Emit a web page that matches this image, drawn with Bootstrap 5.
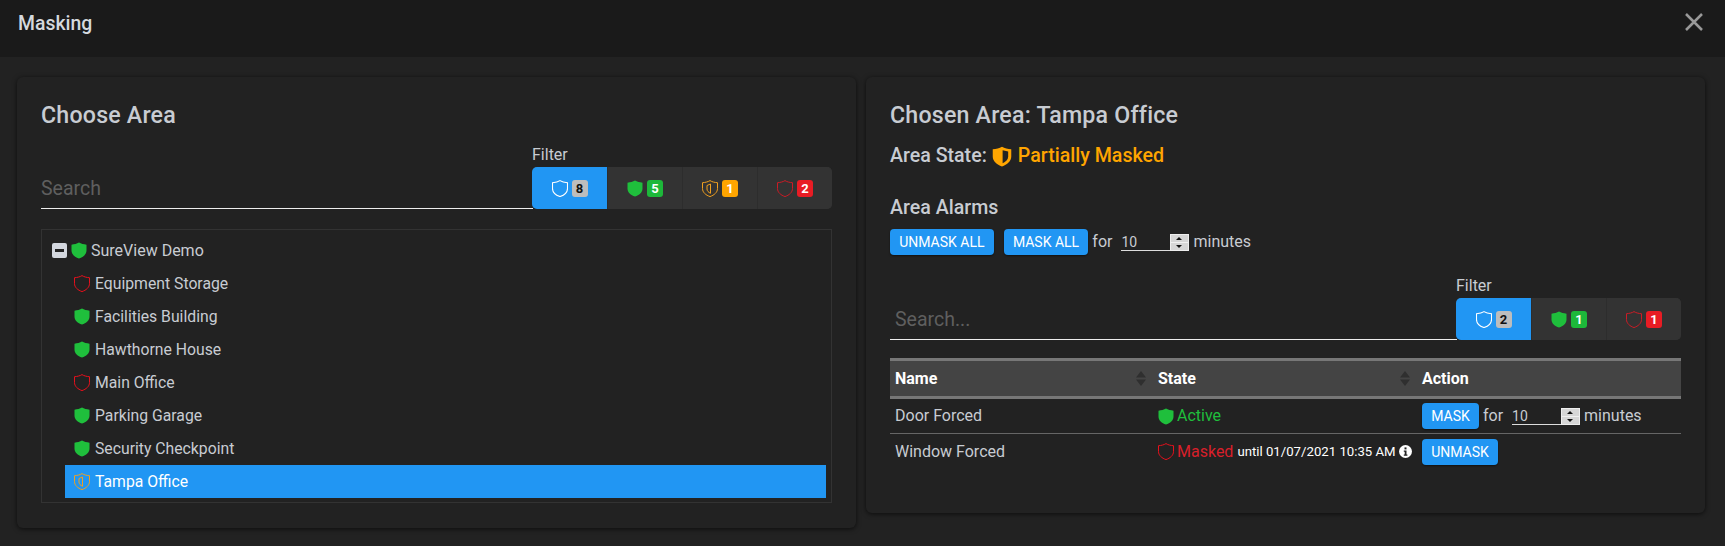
<!DOCTYPE html>
<html lang="en">
<head>
<meta charset="utf-8">
<title>Masking</title>
<link rel="stylesheet" href="https://cdn.jsdelivr.net/npm/bootstrap@5.3.0/dist/css/bootstrap.min.css">
<style>
html,body{height:100%}
body{background:#222;color:#c8ccd2;font-family:Roboto,"Liberation Sans",sans-serif;font-size:16px;overflow:hidden}
.mask-top{height:57px;background:#1a1a1a;padding:0 18px 9px 18px}
.mask-top h1{font-size:19.4px;font-weight:500;margin:0;color:#d5d9de}
.mask-x{width:20px;height:20px;margin-right:3px;margin-bottom:4px}
.mask-body{padding:20px 17px 0 17px;gap:10px;align-items:flex-start}
.pane{background:#222;border-radius:6px;box-shadow:0 1px 5px rgba(0,0,0,.65);padding:24px;padding-bottom:0}
.pane-l{width:839px;height:451px;flex:none}
.pane-r{width:839px;height:436px;flex:none}
.pane h2{font-size:23.2px;font-weight:500;line-height:28px;margin:0;color:#c8ccd2;letter-spacing:.2px}
.filter-row{align-items:flex-end}
.filter-l{margin-top:14px}
.filter-r{margin-top:19px}
.search-inp{flex:1;background:transparent;border:0;border-bottom:1px solid #eee;border-radius:0;color:#ccc;font-size:19.5px;height:42px;padding:2px 0 0 0;outline:0;min-width:0;margin-right:-1px}
.search-pad{padding-left:5px}
.search-inp::placeholder{color:#5f5f5f;opacity:1}
.filter-lbl{font-size:16px;line-height:24px;color:#c8ccd2}
.fgroup{border-radius:5px;overflow:hidden;background:#333;height:42px}
.fbtn{width:75px;border:0;background:#333;display:flex;align-items:center;justify-content:center;gap:4px;padding:0;border-left:1px solid #2d2d2d}
.fbtn:first-child{border-left:0}
.fbtn.on{background:#2196f3}
.cnt{width:16px;height:17px;border-radius:3px;font-size:13px;font-weight:700;line-height:17px;text-align:center;color:#fff}
.cnt-grey{background:#bdbdbd;color:#111}
.cnt-green{background:#1db83a}
.cnt-amber{background:#ffa500}
.cnt-red{background:#e81c24}
.shield{width:16px;height:17px;flex:none}
.shield-lg{width:20px;height:21px}
.tree-box{border:1px solid #333;height:274px;margin-top:20px;padding:4px 5px 0 5px}
.tree-row{height:33px;display:flex;align-items:center;font-size:15.75px;color:#c8ccd2}
.tree-sub{margin-left:18px;padding-left:9px;gap:5px}
.tree-sub.sel{background:#2196f3;color:#fff}
.tree-root{padding-left:5px;gap:4px;font-size:16px}
.minus{width:15px;height:15px;background:#d3d7de;border-radius:2px;display:flex;align-items:center;justify-content:center}
.minus i{display:block;width:9px;height:3px;background:#222}
.state-line{font-size:19.6px;font-weight:500;line-height:24px;margin-top:15px;gap:5.500px}
.amber{color:#ffa500}
.alarms{font-size:19.6px;font-weight:500;line-height:24px;margin-top:28px}
.pill{background:#2196f3;color:#fff;border:0;border-radius:4px;font-size:14px;line-height:26px;height:26px;padding:0 9.200px;box-shadow:0 1px 2px rgba(0,0,0,.5)}
.pill:hover{background:#2196f3;color:#fff}
.pill-next{margin-left:10px}
.for-lbl{margin:0 9px 0 4px}
.min-lbl{margin-left:4px}
.num{width:50px;height:17px;background:transparent;border:0;border-bottom:1px solid #ddd;color:#c8ccd2;font-size:14px;padding:0;outline:0;font-family:inherit;line-height:16px}
.spin{display:flex;flex-direction:column;width:19px;height:17px;background:#f0f0f0;border:1px solid #eee;gap:1px;margin-left:-1px}
.spin i{flex:1;background:#d6d6d6;position:relative;display:block}
.spin i::after{content:"";position:absolute;left:5px;border-left:3px solid transparent;border-right:3px solid transparent}
.spin i.up::after{top:2px;border-bottom:3px solid #111}
.spin i.dn::after{top:2px;border-top:3px solid #111}
.numwrap{display:inline-flex;align-items:flex-start}
.btn-line{margin-top:9px;height:26px;font-size:16px}
.al-table{width:791px;margin:0;color:#c8ccd2;table-layout:fixed;--bs-table-bg:transparent;--bs-table-color:#c8ccd2}
.col-a{width:263px}
.col-b{width:264px}
.al-table th{background:#444;color:#fff;font-weight:700;font-size:16px;border-top:3px solid #777;border-bottom:3px solid #777;height:38px;padding:0 5px;vertical-align:middle;line-height:20px}
.al-table td{font-size:16px;padding:0 5px;height:36px;vertical-align:middle;border-bottom:1px solid #666;background:transparent;color:#c8ccd2}
.al-table tr:last-child td{border-bottom:0;height:36px}
.sorter{width:10px;height:15px;margin-right:2px;flex:none}
.green{color:#1fbf3c}
.red{color:#d81f2a}
.until{font-size:13.2px;font-weight:400;color:#fff;margin-left:1px;white-space:nowrap}
.info{width:13px;height:13px;margin-left:0}
.cellflex{display:flex;align-items:center;gap:3px;white-space:nowrap}
.tbl-top{margin-top:18px}
</style>
</head>
<body>
<svg width="0" height="0" class="position-absolute">
  <defs>
    <path id="sh" d="M8 .6 C10 1.900 12.800 2.500 15.500 2.700 V8.500 C15.500 12.400 12.200 15.100 8 16.600 C3.800 15.100 .5 12.400 .5 8.500 V2.700 C3.200 2.500 6 1.900 8 .6Z"/>
    <symbol id="s-fill" viewBox="0 0 16 17"><use href="#sh" fill="#1fbf3c"/></symbol>
    <symbol id="s-white" viewBox="0 0 16 17"><use href="#sh" fill="none" stroke="#fff" stroke-width="1.100"/></symbol>
    <symbol id="s-red" viewBox="0 0 16 17"><use href="#sh" fill="none" stroke="#e8101c" stroke-width="1"/></symbol>
    <symbol id="s-redd" viewBox="0 0 16 17"><use href="#sh" fill="none" stroke="#cc1c26" stroke-width="1"/></symbol>
    <symbol id="s-part" viewBox="0 0 16 17"><use href="#sh" fill="none" stroke="#f0a020" stroke-width="1"/><path d="M8.500 4 L5 5.500 V9 C5 11 6.500 12.300 8.500 13.300 Z" fill="none" stroke="#f0a020" stroke-width="1"/></symbol>
    <symbol id="s-half" viewBox="0 0 16 17"><use href="#sh" fill="#ffa500"/><path d="M8.500 3.500 L13 4.500 V8.500 C13 11 11 12.900 8.500 14 Z" fill="#222"/></symbol>
    <symbol id="s-sort" viewBox="0 0 10 15"><path d="M5 0 L10 6.500 H0Z M5 15 L0 8.500 H10Z" fill="#2f2f2f"/></symbol>
  </defs>
</svg>

<header class="mask-top d-flex align-items-center justify-content-between">
  <h1>Masking</h1>
  <svg class="mask-x" viewBox="0 0 20 20"><path d="M2 2 L18 18 M18 2 L2 18" stroke="#999" stroke-width="2.500" fill="none"/></svg>
</header>

<main class="mask-body d-flex">
  <section class="pane pane-l">
    <h2>Choose Area</h2>
    <div class="d-flex filter-row filter-l">
      <input class="search-inp" type="text" placeholder="Search" aria-label="Search">
      <div>
        <div class="filter-lbl">Filter</div>
        <div class="fgroup d-flex">
          <button class="fbtn on"><svg class="shield"><use href="#s-white"/></svg><span class="cnt cnt-grey">8</span></button>
          <button class="fbtn"><svg class="shield"><use href="#s-fill"/></svg><span class="cnt cnt-green">5</span></button>
          <button class="fbtn"><svg class="shield"><use href="#s-part"/></svg><span class="cnt cnt-amber">1</span></button>
          <button class="fbtn"><svg class="shield"><use href="#s-redd"/></svg><span class="cnt cnt-red">2</span></button>
        </div>
      </div>
    </div>
    <div class="tree-box">
      <div class="tree-row tree-root"><span class="minus"><i></i></span><svg class="shield"><use href="#s-fill"/></svg><span>SureView Demo</span></div>
      <div class="tree-row tree-sub"><svg class="shield"><use href="#s-red"/></svg><span>Equipment Storage</span></div>
      <div class="tree-row tree-sub"><svg class="shield"><use href="#s-fill"/></svg><span>Facilities Building</span></div>
      <div class="tree-row tree-sub"><svg class="shield"><use href="#s-fill"/></svg><span>Hawthorne House</span></div>
      <div class="tree-row tree-sub"><svg class="shield"><use href="#s-red"/></svg><span>Main Office</span></div>
      <div class="tree-row tree-sub"><svg class="shield"><use href="#s-fill"/></svg><span>Parking Garage</span></div>
      <div class="tree-row tree-sub"><svg class="shield"><use href="#s-fill"/></svg><span>Security Checkpoint</span></div>
      <div class="tree-row tree-sub sel"><svg class="shield"><use href="#s-part"/></svg><span>Tampa Office</span></div>
    </div>
  </section>

  <section class="pane pane-r">
    <h2>Chosen Area: Tampa Office</h2>
    <div class="state-line d-flex align-items-center"><span>Area State:</span><svg class="shield shield-lg"><use href="#s-half"/></svg><span class="amber">Partially Masked</span></div>
    <div class="alarms">Area Alarms</div>
    <div class="btn-line d-flex align-items-center">
      <button class="btn pill">UNMASK ALL</button>
      <button class="btn pill pill-next">MASK ALL</button>
      <span class="for-lbl">for</span>
      <span class="numwrap"><input class="num" type="text" value="10" aria-label="minutes"><span class="spin"><i class="up"></i><i class="dn"></i></span></span>
      <span class="min-lbl">minutes</span>
    </div>
    <div class="d-flex filter-row filter-r">
      <input class="search-inp search-pad" type="text" placeholder="Search..." aria-label="Search">
      <div>
        <div class="filter-lbl">Filter</div>
        <div class="fgroup d-flex">
          <button class="fbtn on"><svg class="shield"><use href="#s-white"/></svg><span class="cnt cnt-grey">2</span></button>
          <button class="fbtn"><svg class="shield"><use href="#s-fill"/></svg><span class="cnt cnt-green">1</span></button>
          <button class="fbtn"><svg class="shield"><use href="#s-redd"/></svg><span class="cnt cnt-red">1</span></button>
        </div>
      </div>
    </div>
    <div class="tbl-top">
      <table class="table al-table">
        <colgroup><col class="col-a"><col class="col-b"><col></colgroup>
        <thead>
          <tr>
            <th><div class="d-flex justify-content-between align-items-center"><span>Name</span><svg class="sorter"><use href="#s-sort"/></svg></div></th>
            <th><div class="d-flex justify-content-between align-items-center"><span>State</span><svg class="sorter"><use href="#s-sort"/></svg></div></th>
            <th>Action</th>
          </tr>
        </thead>
        <tbody>
          <tr>
            <td>Door Forced</td>
            <td><div class="cellflex"><svg class="shield"><use href="#s-fill"/></svg><span class="green">Active</span></div></td>
            <td><div class="d-flex align-items-center">
              <button class="btn pill">MASK</button>
              <span class="for-lbl">for</span>
              <span class="numwrap"><input class="num" type="text" value="10" aria-label="minutes"><span class="spin"><i class="up"></i><i class="dn"></i></span></span>
              <span class="min-lbl">minutes</span>
            </div></td>
          </tr>
          <tr>
            <td>Window Forced</td>
            <td><div class="cellflex"><svg class="shield"><use href="#s-red"/></svg><span class="red">Masked</span> <span class="until">until 01/07/2021 10:35 AM</span><svg class="info" viewBox="0 0 13 13"><circle cx="6.500" cy="6.500" r="6.500" fill="#fff"/><rect x="5.500" y="2.400" width="2" height="2" fill="#222"/><path d="M4.800 5.500 H7.500 V9.500 H8.400 V10.700 H4.800 V9.500 H5.700 V6.700 H4.800Z" fill="#222"/></svg></div></td>
            <td><button class="btn pill">UNMASK</button></td>
          </tr>
        </tbody>
      </table>
    </div>
  </section>
</main>
<script src="https://cdn.jsdelivr.net/npm/bootstrap@5.3.0/dist/js/bootstrap.bundle.min.js"></script>
</body>
</html>
